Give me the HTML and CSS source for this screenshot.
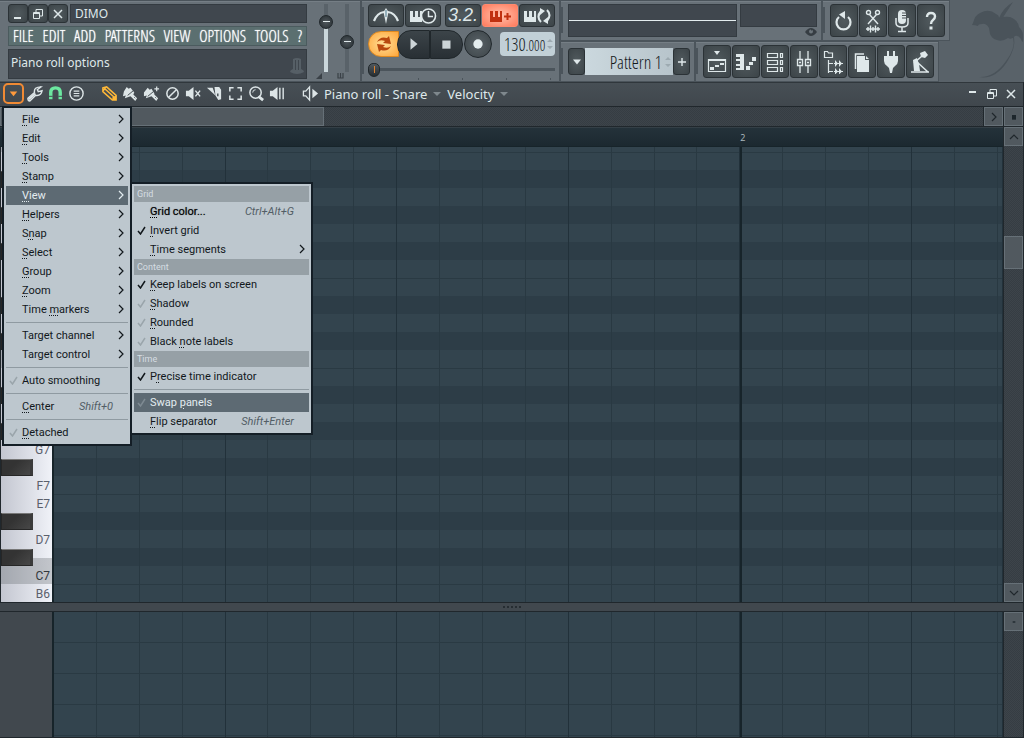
FILE: index.html
```html
<!DOCTYPE html>
<html lang="en">
<head>
  <meta charset="UTF-8">
  <meta name="viewport" content="width=device-width, initial-scale=1.0">
  <title>Piano roll - Snare</title>
  <link rel="stylesheet" href="styles.css">
</head>
<body>

<!-- Shared icons -->
<svg class="sprite" aria-hidden="true">
  <symbol id="arrow" viewBox="0 0 6 10"><path d="M1 1l4 4-4 4" fill="none" stroke="currentColor" stroke-width="1.2"/></symbol>
  <symbol id="check" viewBox="0 0 9 9"><path d="M1 5l2.5 3L8 1" fill="none" stroke="currentColor" stroke-width="1.5"/></symbol>
  <symbol id="min" viewBox="0 0 12 12"><path d="M2 9h7v2H2z" fill="currentColor"/></symbol>
  <symbol id="restore" viewBox="0 0 12 12"><path d="M1.5 4.500h6v6h-6zM1 5.500h7M4 4V1.500h6.500V8H8" fill="none" stroke="currentColor"/></symbol>
  <symbol id="close" viewBox="0 0 12 12"><path d="M2 2l8 8M10 2l-8 8" fill="none" stroke="currentColor" stroke-width="1.5"/></symbol>
  <symbol id="updown" viewBox="0 0 6 12"><path d="M0 4l3-3 3 3zM0 8l3 3 3-3z" fill="currentColor"/></symbol>
</svg>

<header class="topbar">
  <section class="panel main-panel">
    <div class="project">
      <div class="title-row">
        <button class="btn win" aria-label="Minimize"><svg><use href="#min"/></svg></button>
        <button class="btn win" aria-label="Restore"><svg><use href="#restore"/></svg></button>
        <button class="btn win" aria-label="Close"><svg><use href="#close"/></svg></button>
        <div class="screen project-name">DIMO</div>
      </div>
      <nav class="main-menu">
        <a href="#">FILE</a><a href="#">EDIT</a><a href="#">ADD</a><a href="#">PATTERNS</a><a href="#">VIEW</a><a href="#">OPTIONS</a><a href="#">TOOLS</a><a href="#">?</a>
      </nav>
      <div class="screen hint">
        <span>Piano roll options</span>
        <svg class="hint-icon" viewBox="0 0 14 18"><path d="M3 2q4-2 8 0v10q3 1 3 3-7 4-14 0 0-2 3-3z" fill="#565f66"/><path d="M5.500 3v10M8.500 3v10" stroke="#3f464d"/></svg>
      </div>
    </div>
    <div class="sliders">
      <input class="vslider volume" type="range" min="0" max="100" value="79" aria-label="Main volume">
      <input class="vslider" type="range" min="0" max="100" value="43" aria-label="Main pitch">
      <svg class="mark" viewBox="0 0 7 6"><path d="M6 0v6H0z" fill="#3a4147"/></svg>
      <svg class="mark" viewBox="0 0 7 6"><path d="M1 0v5h5V0M3.500 0v5" fill="none" stroke="#3a4147" stroke-width="1.200"/></svg>
    </div>
  </section>

  <section class="panel transport notch">
    <div class="modes">
      <button class="btn mode" aria-label="Metronome"><svg viewBox="0 0 28 18"><path d="M2 14Q5 6 12 5M26 14Q23 6 16 5" fill="none" stroke="#dfe8ea" stroke-width="2.200"/><path d="M14 1l2.500 4L14 17 11.500 5z" fill="#dfe8ea"/><path d="M14 3v7" stroke="#4d7a90"/></svg></button>
      <button class="btn mode" aria-label="Wait for input"><svg viewBox="0 0 28 18"><path d="M1 4h3v6h2V4h3v6h2V4h2v11H1z" fill="#dfe8ea"/><circle cx="19.500" cy="9" r="7" fill="#3f464a" stroke="#dfe8ea" stroke-width="1.600"/><path d="M19.500 4v5.500H24" fill="none" stroke="#dfe8ea" stroke-width="1.500"/></svg></button>
      <button class="btn mode count">3.2.</button>
      <button class="btn mode on" aria-label="Overdub"><svg viewBox="0 0 28 18"><path d="M4 4h3v6h2V4h3v6h2V4h2v11H4z" fill="#c03010"/><path d="M18 9.500h7M21.500 6v7" stroke="#c03010" stroke-width="2"/></svg></button>
      <button class="btn mode" aria-label="Loop recording"><svg viewBox="0 0 28 18"><path d="M1 4h3v6h2V4h3v6h2V4h2v11H1z" fill="#dfe8ea"/><path d="M18 15q-5-5 0-11M24 3q5 5 0 11" fill="none" stroke="#dfe8ea" stroke-width="2"/><path d="M17 1l5 3-5 4zM25 17l-5-3 5-4z" fill="#dfe8ea"/></svg></button>
    </div>
    <div class="play-row">
      <button class="pat-song" aria-label="Pattern mode"><svg viewBox="0 0 18 18"><path d="M2 7q3-6 10-4l2-2 2 8-8-1 2-2q-5-2-8 1zM16 11q-3 6-10 4l-2 2-2-8 8 1-2 2q5 2 8-1z" fill="#b8480e"/></svg></button>
      <button class="round play" aria-label="Play"><svg viewBox="0 0 10 12"><path d="M2 1l6 5-6 5z" fill="#cdd5d8"/></svg></button>
      <button class="round stop" aria-label="Stop"><svg viewBox="0 0 10 12"><path d="M1 3h7v7H1z" fill="#cdd5d8"/></svg></button>
      <button class="round rec" aria-label="Record"><svg viewBox="0 0 12 12"><circle cx="6" cy="6" r="4" fill="#e4edef"/></svg></button>
      <div class="tempo"><span>130<small>.000</small></span><svg><use href="#updown"/></svg></div>
    </div>
    <input class="position" type="range" min="0" max="100" value="0" aria-label="Song position">
    <div class="ticks"><i></i><i></i><i></i><i></i></div>
  </section>

  <div class="right">
    <div class="right-row">
      <section class="panel monitor notch">
        <div class="screen wave"></div>
        <div class="cpu">
          <div class="screen meter"></div>
          <svg class="eye" viewBox="0 0 12 10"><path d="M0 5q6-8 12 0-6 8-12 0z" fill="#363d43"/><circle cx="6" cy="4.500" r="2" fill="#6b747a"/><path d="M6 4V2h2z" fill="#363d43"/></svg>
        </div>
      </section>
      <section class="panel tools notch">
        <button class="btn tool" aria-label="Undo"><svg viewBox="0 0 20 24"><path d="M5 8a7 7 0 1 0 9 0" fill="none" stroke="#dfe8ea" stroke-width="2.200"/><path d="M5 5.500L11 2v8z" fill="#dfe8ea"/></svg></button>
        <button class="btn tool" aria-label="Cut"><svg viewBox="0 0 20 24"><g fill="none" stroke="#dfe8ea" stroke-width="1.400"><circle cx="5.500" cy="3.500" r="2"/><circle cx="14.500" cy="3.500" r="2"/><path d="M6.500 5.500L15 15M13.500 5.500L5 15"/><path d="M3 20h14M5 18v4M7.500 16.500v7M10 18v4M12.500 16.500v7M15 18v4"/></g></svg></button>
        <button class="btn tool" aria-label="Record audio"><svg viewBox="0 0 20 24"><rect x="6" y="1" width="8" height="14" rx="4" fill="#dfe8ea"/><path d="M10 4h4M10 6.500h4M10 9h4" stroke="#4b5357"/><path d="M4 9v5q0 4 6 4t6-4V9M10 18v4M6 22.500h8" fill="none" stroke="#dfe8ea" stroke-width="1.500"/></svg></button>
        <button class="btn tool" aria-label="Help"><svg viewBox="0 0 20 24"><path d="M6 8q0-4 4-4t4 3.500q0 2-2 3.500t-2 4" fill="none" stroke="#dfe8ea" stroke-width="2.400"/><path d="M8.500 17.500h3v3h-3z" fill="#dfe8ea"/></svg></button>
      </section>
    </div>
    <div class="right-row">
      <section class="panel pattern notch">
        <button class="btn side" aria-label="Pattern menu"><svg viewBox="0 0 8 5"><path d="M0 0h8L4 5z" fill="#dfe8ea"/></svg></button>
        <div class="pattern-name"><span>Pattern 1</span><svg><use href="#updown"/></svg></div>
        <button class="btn side" aria-label="Add pattern"><svg viewBox="0 0 8 8"><path d="M0 4h8M4 0v8" stroke="#dfe8ea" stroke-width="1.400"/></svg></button>
      </section>
      <section class="panel tools notch">
        <button class="btn tool" aria-label="Playlist"><svg viewBox="0 0 20 24"><path d="M7 1h6l-3 4z" fill="#dfe8ea"/><path d="M1.500 9.500h17v12h-17z" fill="none" stroke="#dfe8ea" stroke-width="1.200"/><path d="M1 9h18v2H1zM3 17h4v3H3zM8 15h4v2H8zM13 13h4v2h-4z" fill="#dfe8ea"/></svg></button>
        <button class="btn tool" aria-label="Piano roll"><svg viewBox="0 0 20 24"><path d="M0 4h8v16H0v-2h4v-2H0v-2h4v-3H0V9h4V7H0zM10 16h4v4h-4zM13 12h4v3h-4zM16 7h4v4h-4z" fill="#dfe8ea"/></svg></button>
        <button class="btn tool" aria-label="Channel rack"><svg viewBox="0 0 20 24"><path d="M2.500 3.500h10v4h-10zM2.500 10.500h10v4h-10zM2.500 17.500h10v4h-10zM15.500 3.500h2v4h-2zM15.500 10.500h2v4h-2zM15.500 17.500h2v4h-2z" fill="none" stroke="#dfe8ea" stroke-width="1.200"/></svg></button>
        <button class="btn tool" aria-label="Mixer"><svg viewBox="0 0 20 24"><path d="M6 1v8M6 16v7M14 1v8M14 16v7M3.500 9.500h5v6h-5zM11.500 9.500h5v6h-5zM5 12.500h2M13 12.500h2" fill="none" stroke="#dfe8ea" stroke-width="1.300"/></svg></button>
        <button class="btn tool" aria-label="Browser"><svg viewBox="0 0 20 24"><path d="M1.500 1.500h3l1 1.500h4v4.500h-8zM5.500 10v13M5.500 13.500H10M5.500 21.500H10" fill="none" stroke="#dfe8ea" stroke-width="1.200"/><path d="M12 10l3 3.500-3 3.500zM16 10l3 3.500-3 3.500zM12 18l3 3.500-3 3zM16 18l3 3.500-3 3zM11 13h9v1h-9zM11 21h9v1h-9z" fill="#dfe8ea"/></svg></button>
        <button class="btn tool" aria-label="Project picker"><svg viewBox="0 0 20 24"><path d="M3.500 19V4H12" fill="none" stroke="#dfe8ea" stroke-width="1.500"/><path d="M5 6h8v4h4v12H5zM14 6l3 3h-3z" fill="#dfe8ea"/></svg></button>
        <button class="btn tool" aria-label="Plugins"><svg viewBox="0 0 20 24"><path d="M6 1h2v5h4V1h2v5h3v5q0 3-3 5l-2 2-1 5H9l-1-5-2-2q-3-2-3-5V6h3z" fill="#dfe8ea"/></svg></button>
        <button class="btn tool" aria-label="Tempo tap"><svg viewBox="0 0 20 24"><path d="M10 3l5-2 3 4-3 3-4-1zM3 10l4-2 2 6 1 7H4z" fill="#dfe8ea"/><path d="M12 6L4 13M7 12l11 10M1 22h18" fill="none" stroke="#dfe8ea" stroke-width="1.500"/></svg></button>
      </section>
    </div>
  </div>
  <svg class="logo" viewBox="0 0 54 80" aria-hidden="true"><path d="M3 22Q5 14 10 12q9-5 16 1 3 1 3 4 6-2 11-1 8 3 9 10 4 4 4 8v7q-2-1-2-3-3-4-6-3-3 4-7 2-6 4-11 2-5-1-7-6l-1-6q-3-5-7-4-4 0-4 2-3-1-6-1z" fill="#4a535a"/><path d="M29 17Q33 7 43 1L32 18zM43 36Q46 47 36 60 24 77 9 76 25 79 37 61 46 47 44 36z" fill="#4a535a"/></svg>
</header>

<main class="roll">
  <div class="roll-bar">
    <button class="icon-btn options" aria-label="Piano roll options"><svg viewBox="0 0 18 18"><path d="M5 7h8l-4 5z" fill="#ff9a3c"/></svg></button>
    <button class="icon-btn" aria-label="Tools"><svg viewBox="0 0 18 18"><path d="M2 14l7-6q-1-6 7-6l-4 3 1 2 4-1q-1 6-7 5l-6 6q-2 0-2-3z" fill="none" stroke="#dde5e7" stroke-width="1.500"/><path d="M3 15l7-6" stroke="#dde5e7" stroke-width="2"/></svg></button>
    <button class="icon-btn" aria-label="Snap"><svg viewBox="0 0 18 18"><path d="M4 15V8q0-5 5-5t5 5v7" fill="none" stroke="#6ce8a0" stroke-width="3.600"/><path d="M2 12h4M12 12h4" stroke="#41494f"/></svg></button>
    <button class="icon-btn" aria-label="Stamp"><svg viewBox="0 0 18 18"><circle cx="9" cy="9" r="7" fill="none" stroke="#dde5e7" stroke-width="1.500"/><path d="M6 6.500h6M6 9h6M6 11.500h6" stroke="#dde5e7" stroke-width="1.200"/></svg></button>
    <span class="spacer"></span>
    <button class="icon-btn" aria-label="Draw"><svg viewBox="0 0 18 18"><path d="M2 7V3l4-1 10 9v5h-4zM4 4l10 9M2 6.500L5.500 2" fill="none" stroke="#ffb838" stroke-width="1.600"/><path d="M12 16v-3l4-2v5z" fill="#ffb838"/></svg></button>
    <button class="icon-btn" aria-label="Paint"><svg viewBox="0 0 18 18"><path d="M2 7l3-5 2 2 2-1 4 5-1 2 4 4-2 3-5-5-3 1-3 1 1-3-3 1z" fill="#dde5e7"/><path d="M6 11l6-5M13 13l1 1" stroke="#41494f"/></svg></button>
    <button class="icon-btn" aria-label="Paint drum"><svg viewBox="0 0 18 18"><path d="M1 8l4-5 2 2 2-1 3 5v1l4 4-2 3-5-5-3 1-3 1 1-3-3 1z" fill="#dde5e7"/><path d="M5 12l6-5M13 13l1 1" stroke="#41494f"/><path d="M12 4h5M14.500 1.500v5" stroke="#dde5e7" stroke-width="1.300"/></svg></button>
    <button class="icon-btn" aria-label="Delete"><svg viewBox="0 0 18 18"><circle cx="9" cy="9" r="6" fill="none" stroke="#dde5e7" stroke-width="1.600"/><path d="M5 13l8-8" stroke="#dde5e7" stroke-width="1.600"/></svg></button>
    <button class="icon-btn" aria-label="Mute"><svg viewBox="0 0 18 18"><path d="M1 6h3l5-4v14l-5-4H1z" fill="#dde5e7"/><path d="M11 6l5 6M16 6l-5 6" stroke="#dde5e7" stroke-width="1.500"/></svg></button>
    <button class="icon-btn" aria-label="Slice"><svg viewBox="0 0 18 18"><path d="M1 3h6l3 8zM9 2h5l2 3v10l-3 1-3-5z" fill="#dde5e7"/><path d="M12.500 9v3" stroke="#41494f" stroke-width="1.500"/></svg></button>
    <button class="icon-btn" aria-label="Select"><svg viewBox="0 0 18 18"><path d="M3 7V3h4M11 3h4v4M15 11v4h-4M7 15H3v-4" fill="none" stroke="#dde5e7" stroke-width="1.600"/></svg></button>
    <button class="icon-btn" aria-label="Zoom"><svg viewBox="0 0 18 18"><circle cx="8" cy="8" r="6" fill="none" stroke="#dde5e7" stroke-width="1.600"/><path d="M5 8q0-3 3-3" fill="none" stroke="#dde5e7"/><path d="M11 12l5 4" stroke="#dde5e7" stroke-width="3"/></svg></button>
    <button class="icon-btn" aria-label="Playback"><svg viewBox="0 0 18 18"><path d="M1 6h3l5-4v14l-5-4H1z" fill="#dde5e7"/><path d="M11.500 3v12M15 3v12" stroke="#dde5e7" stroke-width="1.500"/></svg></button>
    <span class="spacer"></span>
    <button class="icon-btn" aria-label="Preview"><svg viewBox="0 0 18 18"><path d="M1.500 6.500H4l4-4.500v14l-4-4.500H1.500z" fill="none" stroke="#dde5e7" stroke-width="1.400"/><path d="M11 4l6 5-6 5z" fill="#dde5e7"/></svg></button>
    <h1 class="roll-title"><button class="crumb">Piano roll - Snare</button><button class="crumb">Velocity</button></h1>
    <div class="roll-win">
      <button aria-label="Minimize"><svg viewBox="0 0 12 12"><path d="M2 3h7v2H2z" fill="#dfe8ea"/></svg></button>
      <button aria-label="Restore"><svg><use href="#restore"/></svg></button>
      <button aria-label="Close"><svg><use href="#close"/></svg></button>
    </div>
  </div>

  <div class="hscroll">
    <div class="mesh"><div class="hthumb"></div></div>
    <button class="sb" aria-label="Scroll right"><svg><use href="#arrow"/></svg></button>
    <button class="sb" aria-label="Zoom mode"><svg viewBox="0 0 6 6"><path d="M1.500 1.500h3v3.500h-3z" fill="#1d262c"/></svg></button>
  </div>

  <div class="editor">
    <div class="stage">
      <div class="ruler"><span class="bar-label">2</span></div>
      <div class="notes">
        <div class="keyboard" id="keyboard"></div>
        <div class="grid"></div>
      </div>
    </div>
    <div class="vscroll">
      <button class="sb" aria-label="Scroll up"><svg class="up"><use href="#arrow"/></svg></button>
      <div class="mesh"><div class="vthumb"></div></div>
      <button class="sb" aria-label="Scroll down"><svg class="down"><use href="#arrow"/></svg></button>
    </div>
  </div>

  <div class="splitter"><i></i><i></i><i></i><i></i><i></i></div>

  <div class="control">
    <div class="control-side"></div>
    <div class="grid control-grid"></div>
    <div class="vscroll">
      <button class="sb" aria-label="Collapse"><svg viewBox="0 0 6 6"><path d="M2 3h2" stroke="#1d262c"/></svg></button>
      <div class="mesh"></div>
    </div>
  </div>

  <ul class="menu options-menu">
    <li><button><span><u>F</u>ile</span><svg class="more"><use href="#arrow"/></svg></button></li>
    <li><button><span><u>E</u>dit</span><svg class="more"><use href="#arrow"/></svg></button></li>
    <li><button><span><u>T</u>ools</span><svg class="more"><use href="#arrow"/></svg></button></li>
    <li><button><span><u>S</u>tamp</span><svg class="more"><use href="#arrow"/></svg></button></li>
    <li class="open">
      <button class="active"><span><u>V</u>iew</span><svg class="more"><use href="#arrow"/></svg></button>
      <ul class="menu submenu">
        <li class="heading">Grid</li>
        <li><button class="strong"><span><u>G</u>rid color...</span><kbd>Ctrl+Alt+G</kbd></button></li>
        <li><button><svg class="tick on"><use href="#check"/></svg><span><u>I</u>nvert grid</span></button></li>
        <li><button><span><u>T</u>ime segments</span><svg class="more"><use href="#arrow"/></svg></button></li>
        <li class="heading">Content</li>
        <li><button><svg class="tick on"><use href="#check"/></svg><span><u>K</u>eep labels on screen</span></button></li>
        <li><button><svg class="tick"><use href="#check"/></svg><span><u>S</u>hadow</span></button></li>
        <li><button><svg class="tick"><use href="#check"/></svg><span><u>R</u>ounded</span></button></li>
        <li><button><svg class="tick"><use href="#check"/></svg><span>Black <u>n</u>ote labels</span></button></li>
        <li class="heading">Time</li>
        <li><button><svg class="tick on"><use href="#check"/></svg><span>P<u>r</u>ecise time indicator</span></button></li>
        <li class="sep"></li>
        <li><button class="active"><svg class="tick"><use href="#check"/></svg><span>Swap <u>p</u>anels</span></button></li>
        <li><button><span><u>F</u>lip separator</span><kbd>Shift+Enter</kbd></button></li>
      </ul>
    </li>
    <li><button><span><u>H</u>elpers</span><svg class="more"><use href="#arrow"/></svg></button></li>
    <li><button><span>S<u>n</u>ap</span><svg class="more"><use href="#arrow"/></svg></button></li>
    <li><button><span><u>S</u>elect</span><svg class="more"><use href="#arrow"/></svg></button></li>
    <li><button><span><u>G</u>roup</span><svg class="more"><use href="#arrow"/></svg></button></li>
    <li><button><span><u>Z</u>oom</span><svg class="more"><use href="#arrow"/></svg></button></li>
    <li><button><span>Time <u>m</u>arkers</span><svg class="more"><use href="#arrow"/></svg></button></li>
    <li class="sep"></li>
    <li><button><span>Target channel</span><svg class="more"><use href="#arrow"/></svg></button></li>
    <li><button><span>Target control</span><svg class="more"><use href="#arrow"/></svg></button></li>
    <li class="sep"></li>
    <li><button><svg class="tick"><use href="#check"/></svg><span>Auto smoothing</span></button></li>
    <li class="sep"></li>
    <li><button><span><u>C</u>enter</span><kbd>Shift+0</kbd></button></li>
    <li class="sep"></li>
    <li><button><svg class="tick"><use href="#check"/></svg><span><u>D</u>etached</span></button></li>
  </ul>
</main>

<script>
  // Build the keyboard from the lowest visible key upwards
  const names = ['C', 'C#', 'D', 'D#', 'E', 'F', 'F#', 'G', 'G#', 'A', 'A#', 'B'];
  const keyboard = document.getElementById('keyboard');
  const lastLabel = 91; // keys above G7 sit under the open menu

  for (let note = 83; note < 109; note++) {
    const name = names[note % 12];
    const key = document.createElement('div');
    key.className = 'key';
    if (name.includes('#')) {
      key.classList.add('black');
    } else if (note <= lastLabel) {
      key.textContent = name + Math.floor(note / 12);
    }
    if (name === 'C') key.classList.add('root');
    if (name === 'C#') key.classList.add('root-sharp');
    keyboard.appendChild(key);
  }
</script>

</body>
</html>
```

FILE: styles.css
```css
* {
  box-sizing: border-box;
}

body {
  margin: 0;
  height: 100vh;
  display: flex;
  flex-direction: column;
  overflow: hidden;
  background-color: #41484e;
  color: #dfe8ea;
  font-family: "Noto Sans", "Open Sans", sans-serif;
  font-size: 12px;
}

button {
  display: flex;
  align-items: center;
  justify-content: center;
  margin: 0;
  padding: 0;
  border: none;
  background: none;
  color: inherit;
  font: inherit;
}

svg {
  display: block;
  flex: none;
}

.sprite {
  display: none;
}

/* Top bar */
.topbar {
  display: flex;
  gap: 2px;
  flex: none;
  height: 82px;
  padding: 1px 0;
  background-color: #596269;
}

.panel {
  display: flex;
  background-color: #687178;
  border-top: 1px solid #757e85;
  box-shadow: 0 0 0 1px #4b545b;
}

.notch {
  background-image: linear-gradient(#4b545b, #4b545b);
  background-repeat: no-repeat;
  background-size: 2px calc(100% - 12px);
  background-position: 0 5px;
}

.main-panel {
  gap: 9px;
  width: 360px;
  padding: 2px 3px 2px 8px;
}

.project {
  flex: 1;
  display: flex;
  flex-direction: column;
  gap: 3px;
}

.title-row {
  display: flex;
  height: 19px;
}

.screen {
  background-color: #40474e;
  border: 1px solid #343b41;
}

.btn {
  border: 1px solid #2b3236;
  border-radius: 3px;
  background: radial-gradient(#515a5e, #3c4448);
  color: #dfe8ea;
}

.win {
  width: 20px;
}

.win svg, .roll-win svg {
  width: 12px;
  height: 12px;
}

.project-name {
  flex: 1;
  margin-left: 2px;
  padding-left: 4px;
  line-height: 17px;
}

.main-menu {
  display: flex;
  justify-content: space-between;
  height: 20px;
  padding: 0 4px;
  background-color: #5b6f70;
  border: 1px solid #4b5b5e;
  font-family: "Open Sans Condensed Light", "Roboto Condensed", "Liberation Sans Narrow", "Open Sans Condensed", sans-serif;
  font-size: 16px;
  line-height: 18px;
}

.main-menu a {
  color: #fff;
  text-decoration: none;
  text-shadow: 0 0 1px #fff;
}

.hint {
  flex: 1;
  display: flex;
  justify-content: space-between;
  padding: 3px 2px;
  line-height: 20px;
}

.hint-icon {
  width: 14px;
  height: 18px;
  align-self: flex-end;
}

.sliders {
  display: grid;
  grid-template-columns: 21px 20px;
  grid-template-rows: 1fr 6px;
}

.vslider {
  writing-mode: vertical-lr;
  direction: rtl;
  appearance: none;
  width: 20px;
  height: 68px;
  margin: 0;
  background: linear-gradient(#596269, #596269) center / 4px 100% no-repeat;
}

.vslider.volume {
  background: linear-gradient(#596269 25%, #cad6db 25%) center / 4px 100% no-repeat;
}

.vslider::-webkit-slider-thumb {
  appearance: none;
  width: 14px;
  height: 14px;
  border: 1px solid #20272b;
  border-radius: 50%;
  background: linear-gradient(transparent 5px, #dfe8ea 5px 6px, transparent 6px) center / 7px 100% no-repeat, radial-gradient(#50585d, #262d31);
}

.mark {
  width: 7px;
  height: 6px;
}

/* Transport */
.transport {
  flex-direction: column;
  width: 197px;
  padding: 2px 4px 0 6px;
}

.modes {
  display: flex;
  gap: 1px;
  height: 23px;
}

.mode {
  flex: 1;
}

.mode svg {
  width: 28px;
  height: 18px;
}

.mode.count {
  margin-left: 3px;
  font-family: "Liberation Sans", sans-serif;
  font-size: 18px;
  font-style: italic;
}

.mode.on {
  background: radial-gradient(#ffc3ae, #ff7a5c);
  border-color: #ff8a6e;
}

.play-row {
  display: flex;
  align-items: center;
  height: 34px;
}

.play-row button {
  flex: none;
}

.pat-song {
  width: 31px;
  height: 26px;
  border: 1px solid #e08a20;
  border-radius: 13px 0 0 13px;
  background: radial-gradient(#ffe09a, #ffa63a);
}

.pat-song svg {
  width: 18px;
  height: 18px;
}

.round {
  height: 29px;
  background: linear-gradient(#3c4449, #282f34);
  border: 1px solid #20272b;
}

.round svg {
  width: 12px;
  height: 14px;
}

.play {
  width: 33px;
  margin-left: -2px;
  border-radius: 14px 0 0 14px;
}

.stop {
  width: 33px;
  border-radius: 0 14px 14px 0;
}

.rec {
  width: 28px;
  height: 28px;
  margin: 0 8px 0 1px;
  border-radius: 50%;
  background: radial-gradient(#596267, #3c4448);
}

.rec svg {
  width: 14px;
}

.tempo {
  flex: 1;
  display: flex;
  align-items: center;
  justify-content: space-between;
  height: 24px;
  padding: 0 2px 0 4px;
  border-radius: 4px;
  background-color: #c2d0d7;
  color: #14191c;
  font-family: "Open Sans Condensed Light", "Roboto Condensed", "Liberation Sans Narrow", "Open Sans Condensed", sans-serif;
  font-size: 18px;
}

.tempo small {
  font-size: 14px;
}

.tempo svg, .pattern-name svg {
  width: 6px;
  height: 12px;
  color: #9daab1;
}

.position {
  appearance: none;
  width: 100%;
  height: 17px;
  margin: 0;
  background: linear-gradient(#4b545b, #4b545b) center / 100% 3px no-repeat;
}

.position::-webkit-slider-thumb {
  appearance: none;
  width: 12px;
  height: 14px;
  border: 1px solid #20272b;
  border-radius: 6px 6px 7px 7px;
  background: linear-gradient(#e0812c, #e0812c) center / 1px 7px no-repeat, linear-gradient(#50585d, #262d31);
}

.ticks {
  display: flex;
  justify-content: space-between;
  padding: 0 4px 0 50px;
}

.ticks i {
  width: 1px;
  height: 2px;
  background-color: #4b545b;
}

/* Right panels */
.right, .right-row {
  display: flex;
  gap: 2px;
}

.right {
  flex-direction: column;
}

.right-row {
  height: 39px;
}

.monitor {
  gap: 3px;
  width: 260px;
  padding: 2px 4px 3px 7px;
}

.wave {
  width: 169px;
  background: linear-gradient(transparent 15px, #e4edef 15px 16px, transparent 16px) #40474e;
}

.cpu {
  flex: 1;
  display: flex;
  flex-direction: column;
  justify-content: space-between;
}

.meter {
  height: 23px;
}

.eye {
  width: 12px;
  height: 10px;
  align-self: flex-end;
}

.tools {
  gap: 1px;
  padding: 2px 4px 3px 7px;
}

.tool {
  width: 28px;
}

.tool svg {
  width: 20px;
  height: 24px;
}

.pattern {
  width: 133px;
  padding: 5px 4px 6px 7px;
}

.side {
  width: 17px;
}

.side svg {
  width: 8px;
  height: 8px;
}

.pattern-name {
  flex: 1;
  display: flex;
  align-items: center;
  justify-content: flex-end;
  gap: 3px;
  padding-right: 2px;
  background: linear-gradient(90deg, #cbd8de, #b7c4cb);
  color: #14191c;
  font-family: "Open Sans Condensed Light", "Roboto Condensed", "Liberation Sans Narrow", "Open Sans Condensed", sans-serif;
  font-size: 18px;
  line-height: 24px;
}

.logo {
  width: 54px;
  height: 80px;
  margin-left: auto;
}

/* Piano roll window */
.roll {
  position: relative;
  flex: 1;
  display: flex;
  flex-direction: column;
  min-height: 0;
  border-right: 1px solid #20272c;
}

.roll-bar {
  display: flex;
  align-items: center;
  flex: none;
  height: 25px;
  padding: 0 6px 2px 3px;
  border-top: 1px solid #30373c;
  border-bottom: 1px solid #20272c;
  background: linear-gradient(#474f55, #40474d);
}

.icon-btn {
  width: 21px;
  height: 21px;
}

.icon-btn svg {
  width: 17px;
  height: 17px;
}

.icon-btn.options {
  border: 2px solid #f08a34;
  border-radius: 5px;
}

.spacer {
  width: 12px;
}

.roll-title {
  display: flex;
  gap: 6px;
  margin: 0 0 0 3px;
  font-size: 13px;
  font-weight: normal;
}

.crumb::after {
  content: "";
  margin-left: 6px;
  border: 4px solid transparent;
  border-top-color: #7f888d;
  border-bottom: none;
}

.roll-win {
  display: flex;
  gap: 7px;
  margin-left: auto;
}

/* Scroll bars */
.hscroll {
  display: flex;
  gap: 1px;
  flex: none;
  height: 20px;
  border-bottom: 1px solid #20272c;
  background-color: #20272c;
}

.mesh {
  flex: 1;
  background: repeating-conic-gradient(#363d43 0 25%, #3d444a 0 50%) 0 0 / 2px 2px;
}

.hthumb {
  width: 33%;
  height: 100%;
  background-color: #51595f;
  border: 1px solid #667077;
}

.sb {
  flex: none;
  width: 19px;
  height: 19px;
  background-color: #51595f;
  border: 1px solid #667077;
  color: #20272c;
}

.sb svg {
  width: 8px;
  height: 10px;
}

.sb .up {
  transform: rotate(-90deg);
}

.sb .down {
  transform: rotate(90deg);
}

.vscroll {
  display: flex;
  flex-direction: column;
  width: 20px;
  padding-left: 1px;
  background-color: #20272c;
}

.vthumb {
  height: 33px;
  margin-top: 90px;
  background-color: #51595f;
  border: 1px solid #667077;
}

/* Note editor */
.editor {
  display: flex;
  flex: 1;
  min-height: 0;
  border-bottom: 1px solid #20272c;
}

.stage {
  flex: 1;
  display: flex;
  flex-direction: column;
}

.ruler {
  flex: none;
  height: 20px;
  padding-left: 54px;
  border-top: 1px solid #343f46;
  border-bottom: 1px solid #17242a;
  background: linear-gradient(#24323a, #1c2930);
}

.bar-label {
  display: block;
  margin-left: 72%;
  padding-left: 3px;
  color: #a9b7bc;
  font-size: 9px;
  line-height: 20px;
}

.notes {
  display: flex;
  flex: 1;
  min-height: 0;
}

.keyboard {
  display: flex;
  flex-direction: column-reverse;
  width: 52px;
  overflow: hidden;
  border-left: 1px solid #20272c;
  background: linear-gradient(90deg, #c3c6d0, #f0f2f8);
}

.key {
  flex: none;
  height: 18px;
  padding-right: 2px;
  color: #5b606c;
  font-family: Roboto, "Liberation Sans", sans-serif;
  font-size: 12px;
  line-height: 20px;
  text-align: right;
}

.key.black {
  padding-top: 1px;
}

.key.black::before {
  content: "";
  display: block;
  box-sizing: border-box;
  width: 32px;
  height: 17px;
  border: 1px solid #262626;
  border-top-color: #777;
  border-right: 3px solid #3a3a3a;
  background: linear-gradient(135deg, #333 40%, #474747);
}

.key.root {
  background-color: rgba(90, 95, 100, 0.3);
  color: #33383e;
}

.key.root-sharp {
  background: linear-gradient(transparent 10px, rgba(90, 95, 100, 0.3) 10px);
}

/* Steps, beats, bar line, then one octave of rows */
.grid {
  flex: 1;
  border-left: 2px solid #17242a;
  background:
    linear-gradient(#17242a, #17242a) 72.4% 0 / 2px 100% no-repeat,
    repeating-linear-gradient(90deg, #22313a 0 1px, transparent 1px 18.080%) -1px 0,
    repeating-linear-gradient(90deg, #293942 0 1px, transparent 1px 4.520%) -1px 0,
    linear-gradient(
      #2a3a43 1px, #33444e 1px 18px, #2d3d47 18px 36px, #33444e 36px 54px,
      #2d3d47 54px 72px, #33444e 72px 90px, #2d3d47 90px 108px, #33444e 108px 126px,
      #2a3a43 126px 127px, #33444e 127px 144px, #2d3d47 144px 162px, #33444e 162px 180px,
      #2d3d47 180px 198px, #33444e 198px 216px
    ) 0 5px / 100% 216px;
}

/* Splitter and control lane */
.splitter {
  display: flex;
  align-items: center;
  justify-content: center;
  gap: 2px;
  flex: none;
  height: 8px;
}

.splitter i {
  width: 2px;
  height: 2px;
  background-color: #262d32;
}

.control {
  display: flex;
  flex: none;
  height: 127px;
  border-top: 1px solid #20272c;
  border-bottom: 1px solid #20272c;
}

.control-side {
  width: 52px;
}

.control-grid {
  background:
    linear-gradient(#17242a, #17242a) 72.4% 0 / 2px 100% no-repeat,
    repeating-linear-gradient(90deg, #22313a 0 1px, transparent 1px 18.080%) -1px 0,
    repeating-linear-gradient(90deg, #293942 0 1px, transparent 1px 4.520%) -1px 0,
    repeating-linear-gradient(#33444e 0 30px, #2a3a43 30px 31px);
}

/* Menus */
.menu {
  position: absolute;
  z-index: 2;
  margin: 0;
  padding: 2px;
  list-style: none;
  border: 2px solid #141e26;
  background-color: #bdc7ce;
  color: #12181c;
  font-family: "Noto Sans SemiCondensed", Roboto, "Noto Sans", sans-serif;
  font-size: 11px;
}

.options-menu {
  top: 24px;
  left: 2px;
  width: 130px;
}

.open {
  position: relative;
}

.submenu {
  top: -4px;
  left: 124px;
  width: 183px;
}

.menu button {
  position: relative;
  width: 100%;
  height: 19px;
  padding: 0 4px 1px 16px;
  justify-content: space-between;
  white-space: nowrap;
}

.menu button.active {
  background-color: #5d6a73;
  color: #e3ecf0;
}

.menu button.strong {
  color: #000;
  text-shadow: 0 0 1px rgba(0, 0, 0, 0.5);
}

.menu u {
  text-decoration: underline dotted 1px;
  text-underline-offset: 2px;
}

.menu kbd {
  padding-right: 11px;
  color: #535e66;
  font-family: inherit;
  font-style: italic;
  text-shadow: none;
}

.more {
  width: 6px;
  height: 10px;
}

.tick {
  position: absolute;
  left: 3px;
  width: 9px;
  height: 9px;
  color: #9aa5ab;
}

.tick.on {
  color: #12181c;
}

.active .tick {
  color: #7e8a92;
}

.heading {
  height: 16px;
  padding-left: 3px;
  background-color: #96a0a6;
  color: #d5dde2;
  font-size: 9px;
  line-height: 16px;
}

.sep {
  height: 7px;
  border-top: 3px solid #bdc7ce;
  border-bottom: 3px solid #bdc7ce;
  background-color: #8f9aa1;
}
```
